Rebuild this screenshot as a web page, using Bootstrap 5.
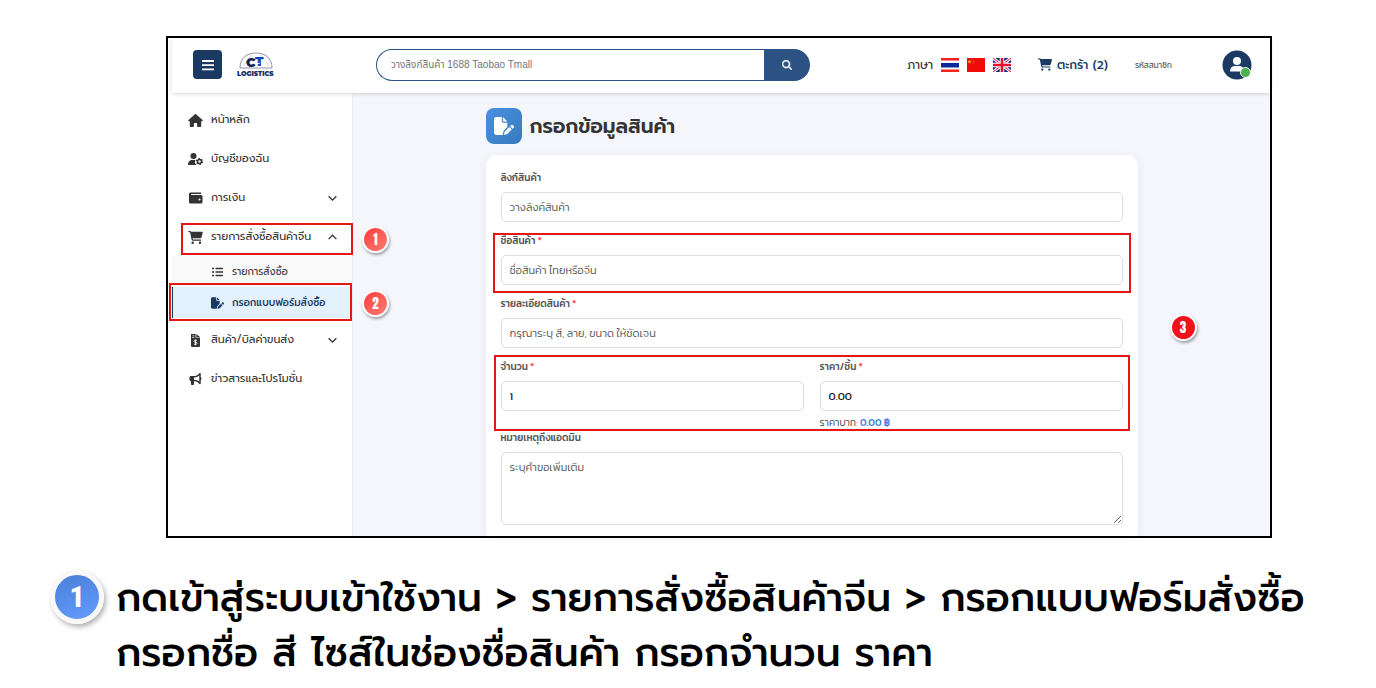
<!DOCTYPE html>
<html lang="th">
<head>
<meta charset="utf-8">
<meta name="viewport" content="width=device-width, initial-scale=1">
<title>กรอกข้อมูลสินค้า</title>
<link href="https://cdn.jsdelivr.net/npm/bootstrap@5.3.0/dist/css/bootstrap.min.css" rel="stylesheet">
<style>
:root{--navy:#1b3a63;--ink:#333;--hit:#e51616}
body{font-family:Prompt,Kanit,"Noto Sans Thai","Noto Sans",sans-serif;background:#fff;color:var(--ink);font-size:10px}
a{text-decoration:none;color:inherit}
.page-wrap{padding:36px 104px 0 166px}
.shot{border:2px solid #000;padding-left:4px;background:#fff}
.topbar{height:55px;padding:0 18px 2px 21px;box-shadow:0 1px 4px rgba(0,0,0,.16);position:relative;z-index:1}
.menu-btn{width:29px;height:29px;background:var(--navy);border:0;border-radius:4px;padding:0}
.brand-logo{margin:0 101px 0 15px}
.search-box{width:434px;height:32px}
.search-box input{border:1px solid #2b5283;border-right:0;border-radius:16px 0 0 16px;font:10px "Liberation Sans","Noto Sans Thai",sans-serif;padding:0 14px}
.search-box input::placeholder{color:#757575}
.search-box button{width:46px;background:#2b5283;border:0;border-radius:0 16px 16px 0;padding:0}
.lang{font-size:12px;gap:8px}
.cart{color:var(--navy);font-size:12px;font-weight:500;gap:5px;margin-left:27px}
.member{font-size:8px;color:#555;margin:0 50px 0 27px}
.dot{width:11px;height:11px;background:#4caf50;border:1px solid #fff;border-radius:50%;right:1px;bottom:2px}
.side{width:181px;padding-top:7px;border-right:1px solid #e9ebef}
.side a{gap:8px}
.m-item{height:39px;padding:1px 12px 0 16px;font-size:11px}
.m-item svg{width:15px}
.sub{background:#fafafa;padding-bottom:2px}
.s-item{height:31px;padding-left:39px;font-size:10px}
.s-item svg{width:13px}
.s-item.on{background:#e3f1fd;color:var(--navy);font-weight:500;border-left:1px solid var(--navy);padding-left:38px}
.area{background:#f4f6fb;padding-top:15px}
.form-col{max-width:652px}
.title-row{margin-bottom:11px}
.t-icon{width:36px;height:36px;border-radius:8px;background:linear-gradient(135deg,#4a90e2,#357abd)}
.area h1{font-size:20px;font-weight:600;line-height:36px}
.panel{font-family:Kanit,Prompt,"Noto Sans Thai",sans-serif;background:#fff;border-radius:12px 12px 0 0;padding:15px 15px 11px;box-shadow:0 2px 10px rgba(0,0,0,.06)}
.panel label{font-size:10px;line-height:15px;font-weight:500;color:#555;margin-bottom:7px;display:block}
.panel label i{color:#ff4d4f;font-style:normal}
.panel .form-control{height:30px;font-size:11px;line-height:16px;border:1px solid #dedede;border-radius:5px;padding:6px 8px;color:#111}
.panel .form-control::placeholder{color:#555;font-weight:300}
.panel textarea.form-control{height:73px}
.fld{margin-bottom:11px}
.hint{line-height:15px;margin-top:4px;color:#444;font-weight:300}
.hint b{color:#3f82dc;font-weight:500}
.hl{position:relative}
.hl::after{content:"";position:absolute;border:2px solid var(--hit);pointer-events:none}
.hl-menu::after{inset:6px -1px 1px 9px}
.hl-sub::after{inset:-4px 0 -3px -4px;z-index:2}
.hl-name::after{inset:0 -8px -8px -8px}
.hl-qty::after{inset:-4px -7px -1px -7px}
.num{position:absolute;width:27px;height:27px;border-radius:50%;border:2px solid #fff;background:linear-gradient(135deg,#ff3b3b,#ff7f73);box-shadow:1px 2px 3px rgba(0,0,0,.35);color:#fff;font:400 13px/23px Anton,"Roboto Condensed",sans-serif;text-align:center}
.num-side{left:190px;top:9px}
.s-item .num-side{left:189px;top:3px}
.num-main{background:#f0131e;left:calc(100% + 32px);top:206px}
.step{padding:32px 20px 0 50px;gap:12px}
.step-no{flex:none;width:54px;height:54px;border-radius:50%;border:5px solid #f8f8f8;background:linear-gradient(160deg,#4a7fd6,#629cff);box-shadow:2px 3px 5px rgba(0,0,0,.3);color:#fff;font:800 30px/44px "Roboto Condensed","Open Sans",sans-serif;text-align:center}
.step p{font-size:39px;line-height:55px;font-weight:500;color:#000}
</style>
</head>
<body>
<svg width="0" height="0" class="d-none">
<symbol id="cart" viewBox="0 0 576 512"><path d="M0 24C0 10.7 10.7 0 24 0H69.5c22 0 41.5 12.8 50.6 32h411c26.3 0 45.5 25 38.6 50.4l-41 152.3c-8.5 31.4-37 53.3-69.5 53.3H170.7l5.4 28.5c2.2 11.3 12.1 19.5 23.6 19.5H488c13.3 0 24 10.7 24 24s-10.7 24-24 24H199.7c-34.6 0-64.3-24.6-70.7-58.5L77.4 54.5c-.7-3.8-4-6.5-7.9-6.5H24C10.7 48 0 37.3 0 24zM128 464a48 48 0 1 1 96 0 48 48 0 1 1-96 0zm336-48a48 48 0 1 1 0 96 48 48 0 1 1 0-96z"/></symbol>
<symbol id="filepen" viewBox="0 0 576 512"><path d="M0 64C0 28.700 28.700 0 64 0H224V128c0 17.700 14.300 32 32 32H384V285.700l-86.800 86.800c-10.300 10.300-17.500 23.100-21 37.200l-18.700 74.900c-2.300 9.200-1.800 18.800 1.300 27.500H64c-35.300 0-64-28.700-64-64V64zm384 64H256V0L384 128zM549.800 235.700l14.400 14.400c15.600 15.600 15.600 40.900 0 56.600l-29.400 29.400-71-71 29.400-29.400c15.600-15.600 40.900-15.600 56.600 0zM311.900 417L441.100 287.800l71 71L382.900 487.900c-4.100 4.100-9.200 7-14.900 8.400l-60.100 15c-5.500 1.400-11.200-.2-15.200-4.200s-5.600-9.700-4.200-15.200l15-60.100c1.400-5.600 4.300-10.800 8.400-14.900z"/></symbol>
<symbol id="down" viewBox="0 0 10 10"><path d="M1.500 3l3.500 3.500L8.500 3" fill="none" stroke="#333" stroke-width="1.200"/></symbol>
</svg>
<div class="page-wrap">
<div class="shot">
<header class="topbar d-flex align-items-center bg-white">
 <button class="menu-btn" type="button" aria-label="เมนู"><svg width="12" height="12" viewBox="0 0 12 12" class="d-block mx-auto" stroke="#fff" stroke-width="1.800"><path d="M0 2h12M0 6.200h12M0 10.400h12"/></svg></button>
 <a href="#" class="brand-logo" aria-label="CT Logistics"><svg class="d-block" width="38" height="26" viewBox="0 0 38 26"><path d="M3 16C3 6 10 1 19 1s16 5 16 15z" fill="#fff" stroke="#8b94a6"/><path d="M6 14L14 3M32 14L24 3" stroke="#c7ccd6" stroke-width=".6"/><text x="9" y="15" font-family="Montserrat,Liberation Sans" font-weight="900" font-size="13" fill="#16204d">C</text><text x="18" y="14" font-family="Montserrat,Liberation Sans" font-weight="900" font-size="13" fill="#1a45b0">T</text><path d="M13 12l4-2 3 2 3-1" stroke="#fff" fill="none" stroke-width=".8"/><text x="0" y="24" font-family="Montserrat,Liberation Sans" font-weight="900" font-size="6.500" fill="#1d2b62">LOGISTICS</text></svg></a>
 <form class="search-box d-flex"><input type="text" class="flex-grow-1" placeholder="วางลิงก์สินค้า 1688 Taobao Tmall" aria-label="ค้นหา"><button type="button" aria-label="ค้นหา"><svg width="10" height="10" viewBox="0 0 512 512" fill="#fff" stroke="#fff" stroke-width="20" class="d-block mx-auto"><path d="M416 208c0 45.900-14.900 88.300-40 122.700L502.600 457.400c12.500 12.500 12.500 32.800 0 45.300s-32.800 12.500-45.300 0L330.700 376c-34.400 25.200-76.800 40-122.700 40C93.100 416 0 322.900 0 208S93.100 0 208 0S416 93.100 416 208zM208 352a144 144 0 1 0 0-288 144 144 0 1 0 0 288z"/></svg></button></form>
 <div class="lang d-flex align-items-center ms-auto"><span>ภาษา</span>
  <svg width="18" height="14" viewBox="0 0 18 14"><path fill="#fff" d="M0 0h18v14H0z"/><path fill="#f5231a" d="M0 0h18v2.500H0zM0 11.500h18V14H0z"/><path fill="#0a2a9c" d="M0 5h18v4.500H0z"/></svg>
  <svg width="18" height="14" viewBox="0 0 18 14"><path fill="#f00a0a" d="M0 0h18v14H0z"/><path fill="#ffd400" d="M2.500 1.800l.5 1.300h1.400l-1.100.9.400 1.400-1.200-.8-1.200.8.400-1.400-1.100-.9H2z"/><path d="M5.800 1.500l.8 1.200v2l-.8 1" fill="none" stroke="#e88a00" stroke-width=".6"/></svg>
  <svg width="18" height="14" viewBox="0 0 18 14"><path fill="#10218b" d="M0 0h18v14H0z"/><path d="M0 0l18 14M18 0L0 14" stroke="#fff" stroke-width="3"/><path d="M0 0l18 14M18 0L0 14" stroke="#e0102a" stroke-width="1"/><path d="M9 0v14M0 7h18" stroke="#fff" stroke-width="4.600"/><path d="M9 0v14M0 7h18" stroke="#e8102a" stroke-width="2.600"/></svg>
 </div>
 <a href="#" class="cart d-flex align-items-center"><svg width="14" height="13" fill="currentColor"><use href="#cart"/></svg><span>ตะกร้า (2)</span></a>
 <span class="member">รหัสสมาชิก</span>
 <a href="#" class="position-relative" aria-label="บัญชี"><svg class="d-block" width="30" height="30" viewBox="0 0 30 30"><circle cx="15" cy="15" r="14.500" fill="#1b3a63"/><circle cx="15" cy="11" r="4" fill="#fff"/><path d="M8 21.500c0-4 2.500-5.500 5-5.500h4c2.500 0 5 1.500 5 5.500z" fill="#fff"/></svg><span class="dot position-absolute"></span></a>
</header>
<div class="d-flex">
<nav class="side flex-shrink-0">
 <a href="#" class="m-item d-flex align-items-center"><svg height="13" viewBox="0 0 576 512" fill="#333"><path d="M575.800 255.500c0 18-15 32.100-32 32.100h-32l.7 160.200c0 2.700-.2 5.400-.5 8.100V472c0 22.100-17.900 40-40 40H392c-22.100 0-40-17.900-40-40v-88c0-17.700-14.300-32-32-32h-64c-17.700 0-32 14.300-32 32v88c0 22.100-17.900 40-40 40h-80c-22.100 0-40-17.900-40-40V287.600H32c-18 0-32-14-32-32.100 0-9 3-17 10-24L266.400 8c7-7 15-8 22-8s15 2 21 7l255.500 224.500c8 7 12 15 11 24z"/></svg>หน้าหลัก</a>
 <a href="#" class="m-item d-flex align-items-center"><svg height="12" viewBox="0 0 30 24" fill="#333"><circle cx="11" cy="6" r="6"/><path d="M0 24c0-7 4-10 8-10h7c-2 4-1 8 2 10z"/><circle cx="23" cy="17" r="4" fill="none" stroke="#333" stroke-width="3"/><circle cx="23" cy="17" r="6" fill="none" stroke="#333" stroke-width="2.400" stroke-dasharray="3.200 3.080"/></svg>บัญชีของฉัน</a>
 <a href="#" class="m-item d-flex align-items-center"><svg height="12" viewBox="0 0 30 24" fill="#333"><path fill-rule="evenodd" d="M5 1h21v3H6v2h20a3 3 0 0 1 3 3v11a3 3 0 0 1-3 3H5a3 3 0 0 1-3-3V4a3 3 0 0 1 3-3zm18 12a2 2 0 1 0 0 4 2 2 0 0 0 0-4z"/></svg>การเงิน<svg class="ms-auto" height="11"><use href="#down"/></svg></a>
 <div class="hl hl-menu"><a href="#" class="m-item d-flex align-items-center"><svg height="13" fill="#333"><use href="#cart"/></svg>รายการสั่งซื้อสินค้าจีน<svg class="ms-auto" height="11" viewBox="0 0 10 10"><path d="M1.500 6.500L5 3l3.500 3.500" fill="none" stroke="#333" stroke-width="1.200"/></svg></a><span class="num num-side">1</span></div>
 <div class="sub">
  <a href="#" class="s-item d-flex align-items-center"><svg height="10" viewBox="0 0 13 10"><path d="M4.500 1.500H12M4.500 5H12M4.500 8.500H12M1 1.500h2M1 5h2M1 8.500h2" stroke="#333" stroke-width="1.400"/></svg>รายการสั่งซื้อ</a>
  <a href="#" class="s-item on hl hl-sub d-flex align-items-center"><svg height="12" fill="currentColor"><use href="#filepen"/></svg>กรอกแบบฟอร์มสั่งซื้อ<span class="num num-side">2</span></a>
 </div>
 <a href="#" class="m-item d-flex align-items-center"><svg height="13" viewBox="0 0 15 13"><path d="M3 0h4.500v3.500H12V12a1 1 0 0 1-1 1H4a1 1 0 0 1-1-1zM8.300 0L12 3H8.300z" fill="#333"/><path d="M4.300 1.800h2M4.300 3.500h2" stroke="#fff" stroke-width=".7"/><path d="M9 6.300H7a1 1 0 0 0 0 2h1a1 1 0 0 1 0 2H6M7.500 5.300v6" fill="none" stroke="#fff" stroke-width=".8"/></svg>สินค้า/บิลค่าขนส่ง<svg class="ms-auto" height="11"><use href="#down"/></svg></a>
 <a href="#" class="m-item d-flex align-items-center"><svg height="12" viewBox="0 0 512 512" fill="#333"><path d="M480 32c0-12.900-7.800-24.600-19.800-29.600s-25.700-2.200-34.900 6.900L381.700 53c-48 48-113.100 75-181 75H64c-35.300 0-64 28.700-64 64v96c0 35.300 28.700 64 64 64v128c0 17.700 14.300 32 32 32h64c17.700 0 32-14.300 32-32V352h8.700c67.900 0 133 27 181 75l43.600 43.600c9.200 9.200 22.900 11.900 34.900 6.900s19.800-16.600 19.800-29.600V300.400c18.600-8.800 32-32.500 32-60.400s-13.400-51.600-32-60.400V32zm-64 76.700V371.300C357.200 317.800 280.500 288 200.700 288H192V192h8.700c79.800 0 156.500-29.800 215.300-83.300z"/></svg>ข่าวสารและโปรโมชั่น</a>
</nav>
<main class="area flex-grow-1">
 <div class="form-col mx-auto position-relative">
  <div class="title-row d-flex align-items-center">
   <span class="t-icon d-flex align-items-center justify-content-center"><svg width="20" height="18" fill="#fff"><use href="#filepen"/></svg></span>
   <h1 class="mb-0 ms-2">กรอกข้อมูลสินค้า</h1>
  </div>
  <form class="panel">
   <div class="fld"><label for="f1">ลิงก์สินค้า</label><input id="f1" class="form-control" placeholder="วางลิงค์สินค้า"></div>
   <div class="fld hl hl-name"><label for="f2">ชื่อสินค้า <i>*</i></label><input id="f2" class="form-control" placeholder="ชื่อสินค้า ไทยหรือจีน"></div>
   <div class="fld"><label for="f3">รายละเอียดสินค้า <i>*</i></label><input id="f3" class="form-control" placeholder="กรุณาระบุ สี, ลาย, ขนาด ให้ชัดเจน"></div>
   <div class="hl hl-qty d-flex">
    <div class="w-50 pe-2"><label for="f4">จำนวน <i>*</i></label><input id="f4" class="form-control" value="1"></div>
    <div class="w-50 ps-2"><label for="f5">ราคา/ชิ้น <i>*</i></label><input id="f5" class="form-control" value="0.00"><div class="hint">ราคาบาท: <b>0.00 ฿</b></div></div>
   </div>
   <div><label for="f6">หมายเหตุถึงแอดมิน</label><textarea id="f6" class="form-control" placeholder="ระบุคำขอเพิ่มเติม"></textarea></div>
  </form>
  <span class="num num-main">3</span>
 </div>
</main>
</div>
</div>
</div>
<section class="step d-flex align-items-start">
 <span class="step-no">1</span>
 <p class="mb-0">กดเข้าสู่ระบบเข้าใช้งาน &gt; รายการสั่งซื้อสินค้าจีน &gt; กรอกแบบฟอร์มสั่งซื้อ<br>กรอกชื่อ สี ไซส์ในช่องชื่อสินค้า กรอกจำนวน ราคา</p>
</section>
<script src="https://cdn.jsdelivr.net/npm/bootstrap@5.3.0/dist/js/bootstrap.bundle.min.js"></script>
</body>
</html>
